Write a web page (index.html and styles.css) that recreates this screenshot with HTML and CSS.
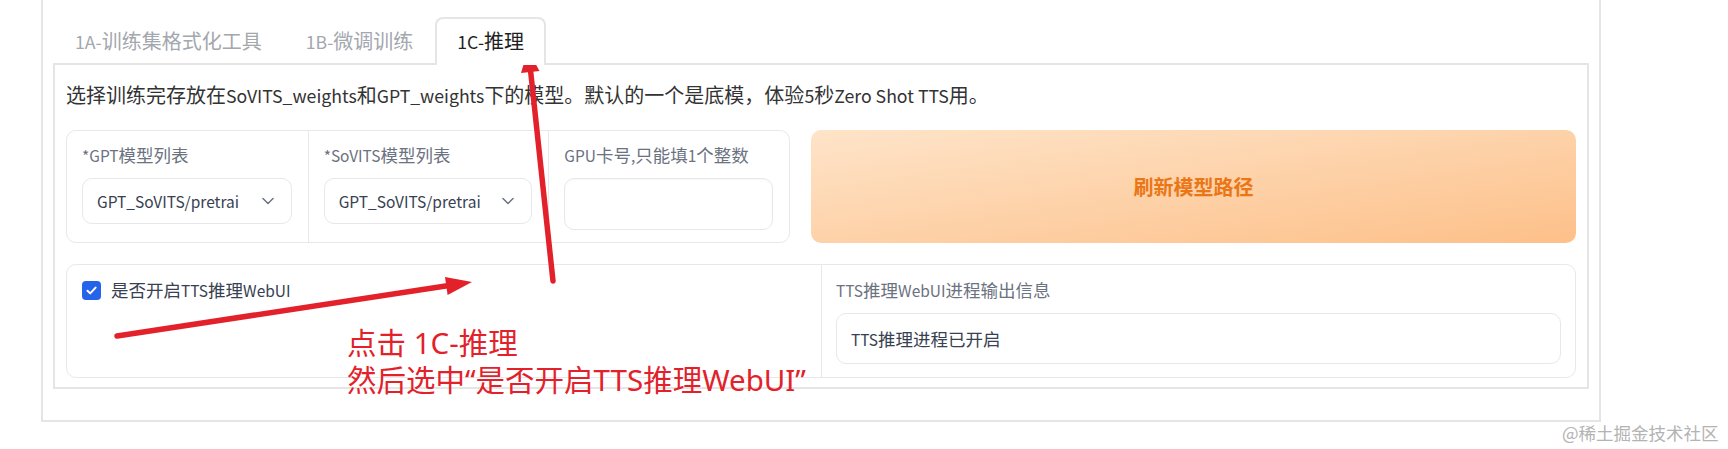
FILE: index.html
```html
<!DOCTYPE html>
<html lang="zh-CN">
<head>
<meta charset="utf-8">
<title>1C-推理</title>
<link rel="stylesheet" href="styles.css">
</head>
<body>
<div class="page">
  <div class="outer">
    <div class="tabs">
      <button class="tab"><span class="en">1A-</span>训练集格式化工具</button>
      <button class="tab"><span class="en">1B-</span>微调训练</button>
      <button class="tab active"><span class="en">1C-</span>推理</button>
    </div>
    <div class="panel">
      <p class="desc">选择训练完存放在<span class="en">SoVITS_weights</span>和<span class="en">GPT_weights</span>下的模型。默认的一个是底模，体验<span class="en">5</span>秒<span class="en">Zero Shot TTS</span>用。</p>
      <div class="row1">
        <div class="form">
          <div class="field">
            <span class="label"><span class="en">*GPT</span>模型列表</span>
            <div class="select"><span>GPT_SoVITS/pretrai</span><svg class="chev" width="12" height="8" viewBox="0 0 12 8"><path d="M1 1.5 L6 6.5 L11 1.5" fill="none" stroke="#6b7280" stroke-width="1.5" stroke-linecap="round" stroke-linejoin="round"/></svg></div>
          </div>
          <div class="field">
            <span class="label"><span class="en">*SoVITS</span>模型列表</span>
            <div class="select"><span>GPT_SoVITS/pretrai</span><svg class="chev" width="12" height="8" viewBox="0 0 12 8"><path d="M1 1.5 L6 6.5 L11 1.5" fill="none" stroke="#6b7280" stroke-width="1.5" stroke-linecap="round" stroke-linejoin="round"/></svg></div>
          </div>
          <div class="field">
            <span class="label"><span class="en">GPU</span>卡号<span class="en">,</span>只能填<span class="en">1</span>个整数</span>
            <div class="input"></div>
          </div>
        </div>
        <button class="primary">刷新模型路径</button>
      </div>
      <div class="row2">
        <div class="cell">
          <label class="check"><span class="box"><svg width="13" height="13" viewBox="0 0 13 13"><path d="M2.5 6.8 L5.2 9.4 L10.6 3.6" fill="none" stroke="#fff" stroke-width="2" stroke-linecap="round" stroke-linejoin="round"/></svg></span><span>是否开启<span class="en">TTS</span>推理<span class="en">WebUI</span></span></label>
        </div>
        <div class="cell right">
          <span class="label"><span class="en">TTS</span>推理<span class="en">WebUI</span>进程输出信息</span>
          <div class="textbox"><span class="en">TTS</span>推理进程已开启</div>
        </div>
      </div>
    </div>
  </div>

  <svg class="arrows" width="1728" height="449" viewBox="0 0 1728 449">
    <line x1="117" y1="336" x2="449" y2="285.5" stroke="#e3212b" stroke-width="5.5" stroke-linecap="round"/>
    <polygon points="472,282 445,277 447.6,295" fill="#e3212b"/>
    <line x1="553" y1="281" x2="530.5" y2="70" stroke="#e3212b" stroke-width="5.5" stroke-linecap="round"/>
    <polygon points="528,50 521,73 539.5,71" fill="#e3212b"/>
  </svg>
  <div class="note">点击 1C-推理<br>然后选中“是否开启TTS推理WebUI”</div>
  <div class="watermark">@稀土掘金技术社区</div>
</div>
</body>
</html>
```

FILE: styles.css
```css
* {
  box-sizing: border-box;
}

body {
  margin: 0;
  background: #ffffff;
  font-family: "Noto Sans CJK SC", "Noto Sans", sans-serif;
}

.page {
  position: relative;
  width: 1728px;
  height: 449px;
  overflow: hidden;
}

.en {
  font-size: 0.885em;
}

.outer {
  margin-left: 41px;
  width: 1560px;
  padding: 17px 10px 31px;
  border: 2px solid #e5e5e5;
  border-top: none;
}

.tabs {
  display: flex;
  position: relative;
  z-index: 1;
  margin-bottom: -2px;
}

.tab {
  height: 48px;
  display: flex;
  align-items: baseline;
  padding: 7px 20px 0;
  line-height: 30px;
  border: 2px solid transparent;
  border-bottom: none;
  border-radius: 8px 8px 0 0;
  background: transparent;
  font-family: inherit;
  font-size: 20px;
  color: #a3a7ae;
  white-space: nowrap;
}

.tab.active {
  border-color: #e5e5e5;
  background: #ffffff;
  color: #1f1f1f;
}

.panel {
  border: 2px solid #e5e5e5;
  padding: 15px 11px 9px;
  background: #ffffff;
}

.desc {
  margin: 0 0 20px;
  font-size: 20px;
  line-height: 30px;
  color: #333333;
  white-space: nowrap;
}

.row1 {
  display: grid;
  grid-template-columns: 724px 1fr;
  gap: 21px;
  height: 113px;
  margin-bottom: 21px;
}

.form {
  display: grid;
  grid-template-columns: repeat(3, 1fr);
  border: 1px solid #e7e8eb;
  border-radius: 10px;
}

.field {
  display: flex;
  flex-direction: column;
  padding: 12px 16px 0 15px;
}

.field + .field {
  border-left: 1px solid #e7e8eb;
}

.label {
  font-size: 17.5px;
  line-height: 24px;
  color: #6b7280;
  margin-bottom: 11px;
  white-space: nowrap;
}

.select {
  height: 46px;
  display: flex;
  align-items: center;
  justify-content: space-between;
  padding: 0 17px 0 14px;
  border: 1px solid #e7e8eb;
  border-radius: 10px;
  font-size: 15.5px;
  color: #374151;
  white-space: nowrap;
}

.input {
  height: 52px;
  border: 1px solid #e7e8eb;
  border-radius: 10px;
  box-shadow: inset 0 1px 2px rgba(0, 0, 0, 0.04);
}

.primary {
  border: none;
  border-radius: 10px;
  background: linear-gradient(to bottom right, #fee4c9, #fdc089);
  color: #eb7616;
  font-family: inherit;
  font-weight: 700;
  font-size: 20px;
}

.row2 {
  display: grid;
  grid-template-columns: 1fr 1fr;
  height: 114px;
  border: 1px solid #e7e8eb;
  border-radius: 10px;
}

.cell {
  padding: 13px 15px;
}

.cell.right {
  display: flex;
  flex-direction: column;
  border-left: 1px solid #e7e8eb;
  padding: 13px 14px 0 14px;
}

.check {
  display: flex;
  align-items: center;
  gap: 10px;
  height: 24px;
  font-size: 17.5px;
  line-height: 24px;
  color: #374151;
  white-space: nowrap;
}

.box {
  flex: none;
  width: 19px;
  height: 19px;
  border-radius: 4px;
  background: #2563eb;
  display: flex;
  align-items: center;
  justify-content: center;
}

.textbox {
  height: 51px;
  display: flex;
  align-items: center;
  padding: 0 14px;
  border: 1px solid #e7e8eb;
  border-radius: 10px;
  font-size: 17.5px;
  color: #374151;
  white-space: nowrap;
}

.arrows {
  position: absolute;
  left: 0;
  top: 0;
  pointer-events: none;
}

.note {
  position: absolute;
  left: 347px;
  top: 324px;
  font-family: "Noto Sans", "Noto Sans CJK SC", sans-serif;
  font-size: 29.5px;
  line-height: 37px;
  color: #e3212b;
  white-space: nowrap;
}

.watermark {
  position: absolute;
  left: 1562px;
  top: 422px;
  font-size: 17.5px;
  line-height: 22px;
  color: #b3b3b3;
  white-space: nowrap;
}
```
